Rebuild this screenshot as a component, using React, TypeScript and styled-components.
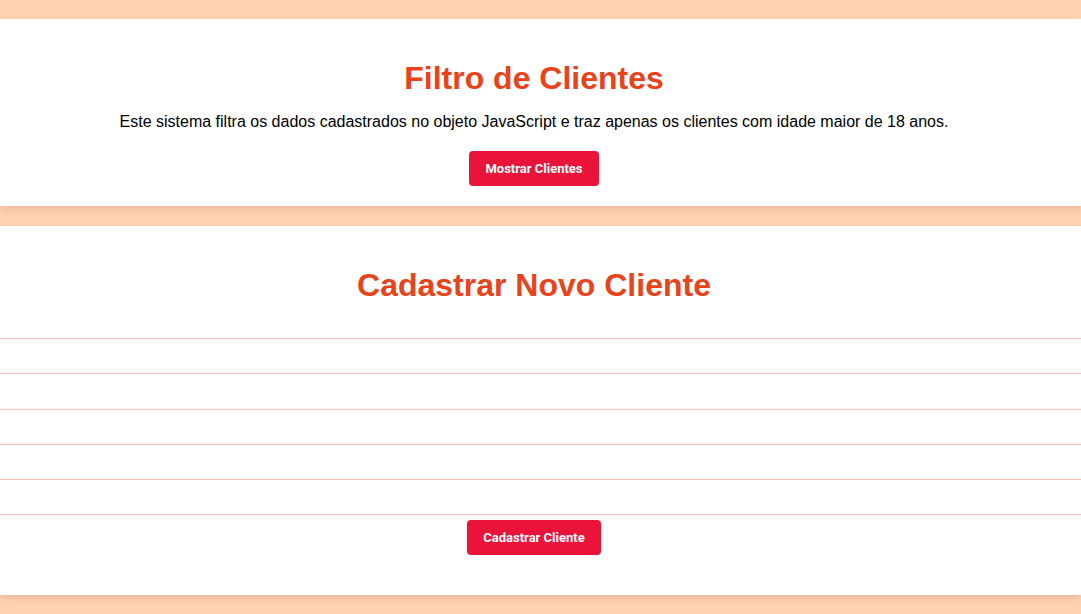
import { FC } from "react";
import styled, { createGlobalStyle } from "styled-components";

const GlobalStyle = createGlobalStyle`
  * { box-sizing: border-box; }
  html, body {
    margin: 0;
    padding: 0;
    background: #ffd2b4;
    font-family: "Liberation Sans", Arial, sans-serif;
  }
  body { padding-top: 19px; min-height: 614px; }
`;

// a página original tinha a barra de rolagem, por isso o centro fica um pouco à esquerda
const Section = styled.section<{ $bottom: number }>`
  background: #ffffff;
  padding: 20px 13px ${(p) => p.$bottom}px 0;
  margin-bottom: 20px;
  text-align: center;
  box-shadow: 0 3px 8px rgba(120, 60, 20, 0.18);
`;

const Title = styled.h1<{ $after: number }>`
  margin: 21px 0 ${(p) => p.$after}px;
  font-size: 32px;
  font-weight: 700;
  color: #e8431b;
`;

const Text = styled.p`
  margin: 0 0 20.5px;
  font-size: 16px;
  color: #000;
`;

const Button = styled.button`
  height: 35px;
  padding: 0 16px;
  border: none;
  border-radius: 4px;
  background: #ea143b;
  color: #fff;
  font-family: Roboto, "Liberation Sans", Arial, sans-serif;
  font-size: 13px;
  font-weight: 700;
  cursor: pointer;
`;

const Form = styled.form`
  display: flex;
  flex-direction: column;
  align-items: center;
  margin-right: -13px;
`;

const Fields = styled.div`
  width: 100%;
  border-top: 1px solid #ffbfb4;
  margin-bottom: 5px;
`;

const Input = styled.input`
  display: block;
  width: 100%;
  height: 35.25px;
  border: none;
  border-bottom: 1px solid #ffbfb4;
  background: transparent;
  outline: none;
  padding: 0 10px;
  font-size: 14px;
`;

const SubmitWrap = styled.div`
  padding-right: 13px;
`;

const campos = ["nome", "idade", "email", "telefone", "cidade"];

const App: FC = () => {
  return (
    <>
      <GlobalStyle />
      {/* filtro */}
      <Section $bottom={20}>
        <Title $after={15.5}>Filtro de Clientes</Title>
        <Text>
          Este sistema filtra os dados cadastrados no objeto JavaScript e traz apenas os clientes com idade maior de 18 anos.
        </Text>
        <Button type="button">Mostrar Clientes</Button>
      </Section>

      {/* cadastro */}
      <Section $bottom={40}>
        <Title $after={34}>Cadastrar Novo Cliente</Title>
        <Form onSubmit={(e) => e.preventDefault()}>
          <Fields>
            {campos.map((c) => (
              <Input key={c} name={c} aria-label={c} />
            ))}
          </Fields>
          <SubmitWrap>
            <Button type="submit">Cadastrar Cliente</Button>
          </SubmitWrap>
        </Form>
      </Section>
    </>
  );
};

export default App;
